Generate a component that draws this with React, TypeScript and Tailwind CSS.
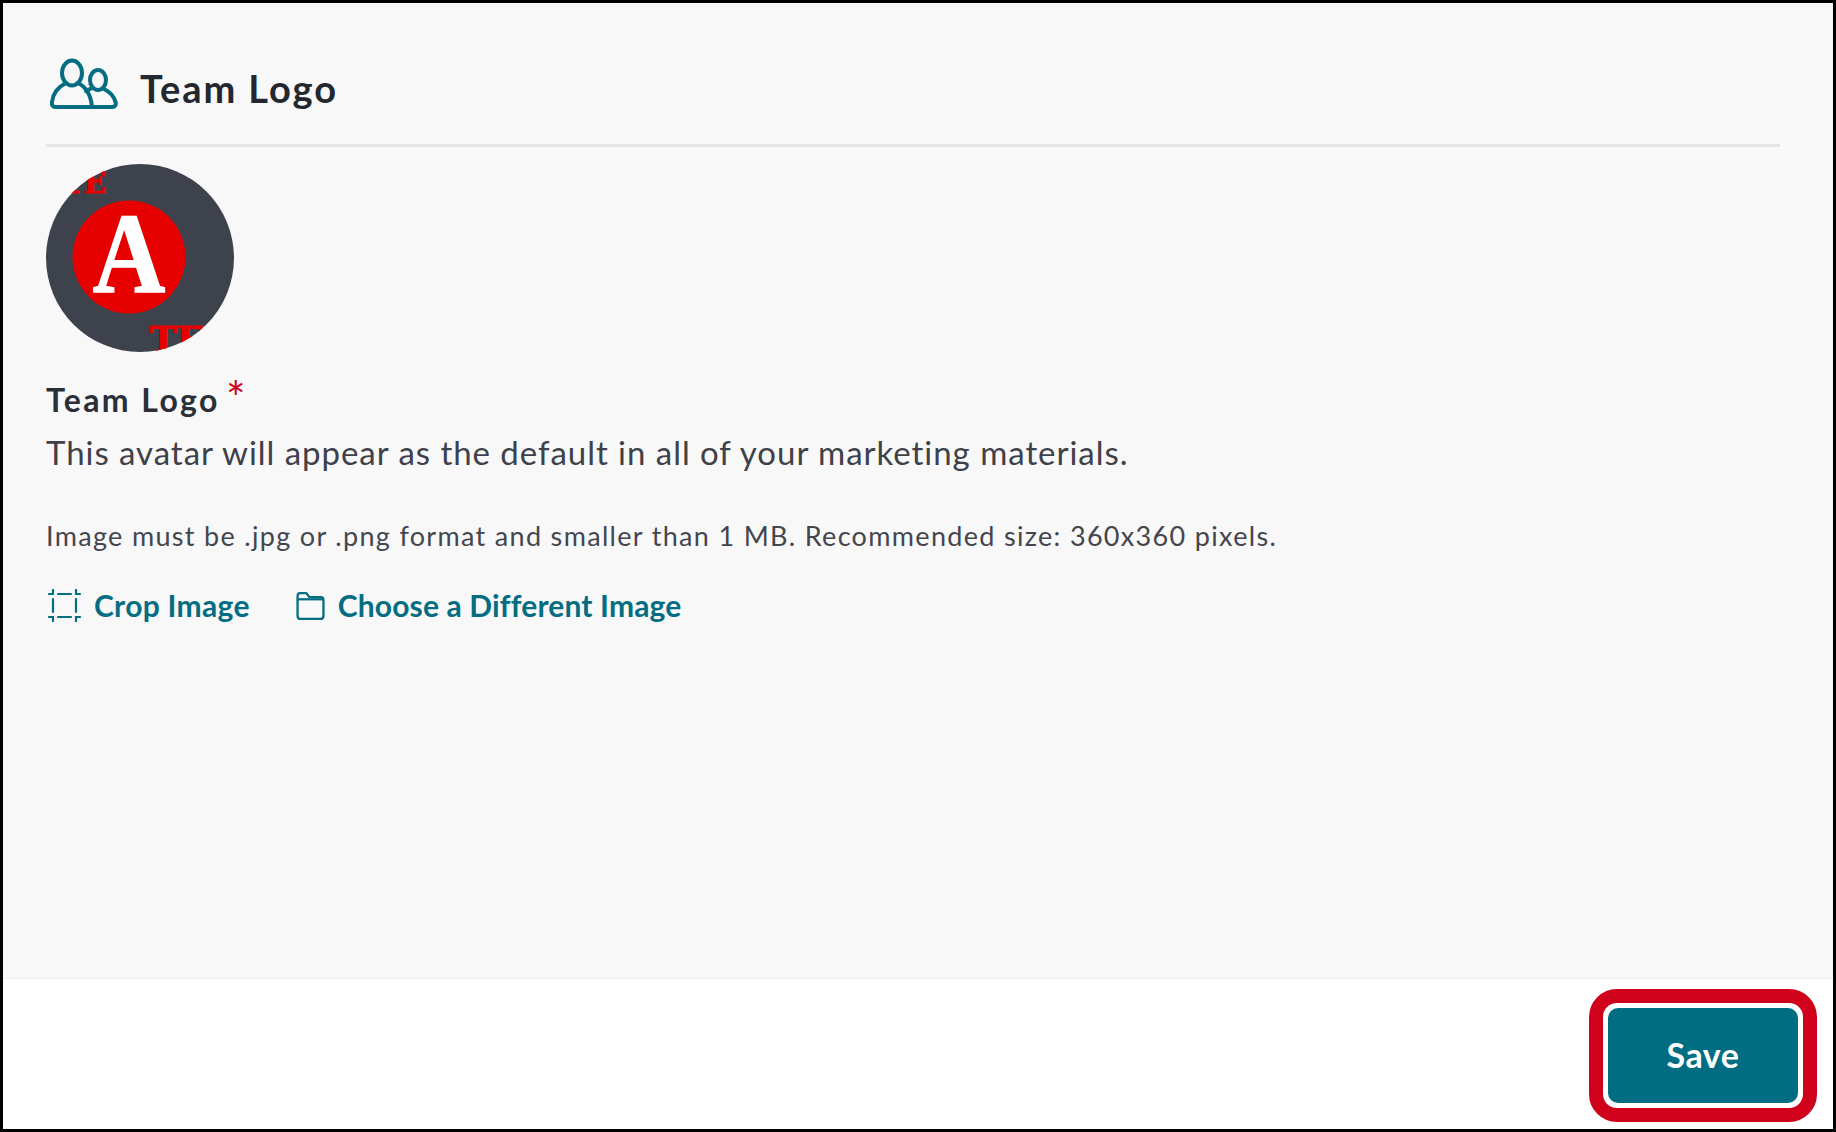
function TeamIcon() {
  return (
    <svg width="68" height="52" viewBox="0 0 68 52" fill="none" stroke="#046d82" strokeWidth="4" strokeLinejoin="round" strokeLinecap="round" className="-mt-[8px] shrink-0">
      <ellipse cx="22" cy="15" rx="10" ry="12.500" />
      <ellipse cx="48" cy="22" rx="8" ry="10" />
      <path d="M16 25 C8 29 3 35 2 44 C1.500 47 3 49 5 49 H62 C65 49 66.500 47 65.500 44 C64 38 60 34 54 31" />
      <path d="M28 25 C36 29 41 37 42 49" />
      <path d="M42 30 C40 31 38 32 36 33" />
    </svg>
  );
}

function CropIcon() {
  return (
    <svg width="33" height="33" viewBox="0 0 33 33" fill="none" stroke="#046d82" strokeWidth="2.200" strokeLinecap="round" className="ml-[2px] shrink-0">
      <path d="M10 5 H23" />
      <path d="M10 28 H23" />
      <path d="M5 10 V23" />
      <path d="M28 10 V23" />
      <path d="M1 5 H5 V1" />
      <path d="M28 1 V5 H32" />
      <path d="M1 28 H5 V32" />
      <path d="M28 32 V28 H32" />
    </svg>
  );
}

function FolderIcon() {
  return (
    <svg width="29" height="29" viewBox="0 0 28 28" fill="none" stroke="#046d82" strokeWidth="2.200" strokeLinejoin="round" className="ml-[46px] shrink-0">
      <path d="M1.500 5 C1.500 3 2.500 2 4 2 H10 L13 6 H24 C26 6 26.500 7 26.500 8.500 V24 C26.500 26 25.500 27 24 27 H4 C2.500 27 1.500 26 1.500 24 Z" />
      <path d="M1.500 8 H26.500" />
    </svg>
  );
}

function TeamAvatar() {
  return (
    <svg width="188" height="188" viewBox="0 0 188 188" className="shrink-0">
      <defs>
        <clipPath id="avatar-clip">
          <circle cx="94" cy="94" r="94" />
        </clipPath>
      </defs>
      <g clipPath="url(#avatar-clip)">
        <rect width="188" height="188" fill="#3d424d" />
        <circle cx="83" cy="93" r="56.500" fill="#e60000" />
        <text transform="translate(83 128) scale(0.88 1)" textAnchor="middle" fontFamily="'Liberation Serif', serif" fontWeight="700" fontSize="114" fill="#ffffff" stroke="#ffffff" strokeWidth="1.500">A</text>
        <text x="60" y="29" textAnchor="end" fontFamily="'DejaVu Serif', serif" fontWeight="700" fontSize="29" fill="#e60000" stroke="#e60000" strokeWidth="1">TE</text>
        <text x="104" y="188" fontFamily="'DejaVu Serif', serif" fontWeight="700" fontSize="36" fill="#e60000" stroke="#e60000" strokeWidth="1">TE</text>
      </g>
    </svg>
  );
}

export default function App() {
  return (
    <div className="flex h-[1132px] w-[1836px] flex-col border-[3px] border-black bg-white font-['Lato',sans-serif]">
      <div className="flex h-[976px] flex-col border-b border-[#eeeeee] bg-[#f8f8f8] pl-[43px] pr-[53px]">
        <div className="flex h-[144px] items-center gap-[22px] border-b-[3px] border-[#e5e5e5] pl-[4px] pt-[29px]">
          <TeamIcon />
          <h1 className="text-[38px] font-bold leading-none tracking-[1.9px] text-[#23272f]">Team Logo</h1>
        </div>
        <div className="mt-[17px]">
          <TeamAvatar />
        </div>
        <div className="mt-[30px] flex h-[36px] items-center text-[32px] font-bold leading-none tracking-[2.4px] text-[#2b2f38]">
          Team Logo
          <span className="ml-[6px] translate-y-[-2px] text-[46px] font-normal leading-none text-[#d0021b]">*</span>
        </div>
        <p className="mt-[15px] text-[33px] leading-[38px] tracking-[0.96px] text-[#3e4149]">
          This avatar will appear as the default in all of your marketing materials.
        </p>
        <p className="mt-[50px] text-[27px] leading-[30px] tracking-[1.32px] text-[#43464e]">
          Image must be .jpg or .png format and smaller than 1 MB. Recommended size: 360x360 pixels.
        </p>
        <div className="mt-[35px] flex items-center text-[30px] font-bold leading-[38px] text-[#046d82]">
          <CropIcon />
          <span className="ml-[13px] tracking-[0.3px]">Crop Image</span>
          <FolderIcon />
          <span className="ml-[13px] tracking-[0.15px]">Choose a Different Image</span>
        </div>
      </div>
      <div className="flex flex-1 items-center justify-end pr-[16px] pt-[3px]">
        <div className="rounded-[28px] border-[14px] border-[#d0021b] p-[5px]">
          <button className="flex h-[95px] w-[190px] items-center justify-center rounded-[10px] bg-[#006d82] pb-[3px] text-[34px] font-bold tracking-[0.6px] text-white">
            Save
          </button>
        </div>
      </div>
    </div>
  );
}
